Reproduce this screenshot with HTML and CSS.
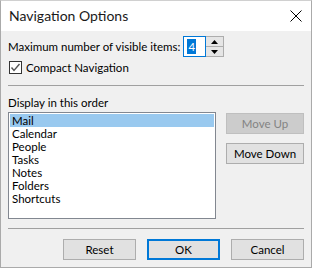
FILE: index.html
```html
<!DOCTYPE html>
<html lang="en">
<head>
    <meta charset="UTF-8">
    <title>Navigation Options</title>
    <link rel="stylesheet" href="styles.css">
</head>
<body>

    <div class="dialog">
        <div class="titlebar">
            <span class="title">Navigation Options</span>
            <svg class="close" width="12" height="12" viewBox="0 0 12 12">
                <path d="M0.5 0.5 L11.5 11.5 M11.5 0.5 L0.5 11.5" stroke="#000" stroke-width="1" fill="none"/>
            </svg>
        </div>

        <div class="content">
            <div class="max-row">
                <span>Maximum number of visible items:</span>
                <div class="spin-input"><span class="sel">4</span></div>
                <div class="spin-buttons">
                    <div class="spin-half">
                        <svg width="7" height="4" viewBox="0 0 7 4"><path d="M3.5 0 L7 4 L0 4 Z" fill="#000"/></svg>
                    </div>
                    <div class="spin-half">
                        <svg width="7" height="4" viewBox="0 0 7 4"><path d="M0 0 L7 0 L3.5 4 Z" fill="#000"/></svg>
                    </div>
                </div>
            </div>

            <div class="check-row">
                <span class="checkbox">
                    <svg width="11" height="11" viewBox="0 0 11 11">
                        <path d="M1.5 5.5 L4 8.5 L9.5 2" stroke="#555" stroke-width="1.4" fill="none"/>
                    </svg>
                </span>
                <span>Compact Navigation</span>
            </div>

            <div class="separator"></div>

            <div class="order-label">Display in this order</div>

            <div class="order-area">
                <ul class="listbox">
                    <li class="selected">Mail</li>
                    <li>Calendar</li>
                    <li>People</li>
                    <li>Tasks</li>
                    <li>Notes</li>
                    <li>Folders</li>
                    <li>Shortcuts</li>
                </ul>
                <div class="side-buttons">
                    <button class="btn" disabled>Move Up</button>
                    <button class="btn">Move Down</button>
                </div>
            </div>

            <div class="separator sep-bottom"></div>

            <div class="footer">
                <button class="btn">Reset</button>
                <button class="btn btn-default">OK</button>
                <button class="btn">Cancel</button>
            </div>
        </div>
    </div>

</body>
</html>
```

FILE: styles.css
```css
body {
    margin: 0;
    padding: 0;
    font-family: Lato, "Noto Sans", sans-serif;
    font-size: 11.5px;
    line-height: 14px;
    color: #000;
}

.dialog {
    width: 312px;
    height: 268px;
    box-sizing: border-box;
    border: 1px solid #aaaaaa;
    border-top-color: #d0d0d0;
    background-color: #f0f0f0;
}

.titlebar {
    height: 30px;
    background-color: #fff;
    display: flex;
    align-items: center;
    justify-content: space-between;
    padding: 0 9px 0 8px;
}

.title {
    font-size: 14px;
    color: #1a1a1a;
}

.content {
    padding: 5px 7px 0 7px;
}

.max-row {
    display: flex;
    align-items: center;
    height: 21px;
}

.max-row > span {
    margin-right: 3px;
}

.spin-input {
    width: 23px;
    height: 21px;
    box-sizing: border-box;
    border: 1px solid #0078d7;
    background-color: #fff;
    display: flex;
    align-items: center;
    padding-left: 3px;
}

.sel {
    background-color: #0078d7;
    color: #fff;
    line-height: 15px;
    padding: 0 1px;
}

.spin-buttons {
    width: 18px;
    height: 21px;
    box-sizing: border-box;
    border: 1px solid #adadad;
    border-left: none;
    display: flex;
    flex-direction: column;
}

.spin-half {
    flex: 1;
    display: flex;
    align-items: center;
    justify-content: center;
    background-color: #e5e5e5;
}

.spin-half:first-child {
    border-bottom: 1px solid #adadad;
}

.check-row {
    display: flex;
    align-items: center;
    margin-top: 4px;
    height: 13px;
}

.checkbox {
    width: 13px;
    height: 13px;
    box-sizing: border-box;
    border: 1px solid #333;
    background-color: #fff;
    margin: 0 4px 0 1px;
    display: flex;
}

.separator {
    height: 1px;
    background-color: #a0a0a0;
    margin-top: 11px;
}

.order-label {
    margin-top: 9px;
    line-height: 16px;
}

.order-area {
    display: flex;
    margin-top: 1px;
}

.listbox {
    list-style: none;
    margin: 0;
    padding: 1px;
    width: 209px;
    height: 107px;
    box-sizing: border-box;
    border: 1px solid #828790;
    background-color: #fff;
}

.listbox li {
    height: 13px;
    line-height: 13px;
    padding-left: 2px;
}

.listbox li.selected {
    background-color: #99c9ef;
}

.side-buttons {
    display: flex;
    flex-direction: column;
    margin-left: 10px;
    gap: 9px;
    padding-top: 1px;
}

.btn {
    width: 78px;
    height: 21px;
    box-sizing: border-box;
    border: 1px solid #adadad;
    background-color: #e1e1e1;
    font-family: inherit;
    font-size: 11.5px;
    color: #000;
    padding: 0;
}

.btn:disabled {
    background-color: #cccccc;
    border-color: #bfbfbf;
    color: #838383;
}

.sep-bottom {
    margin-top: 9px;
}

.footer {
    display: flex;
    justify-content: flex-end;
    gap: 11px;
    margin-top: 10px;
}

.footer .btn {
    width: 73px;
}

.btn-default {
    border: 2px solid #0078d7;
}
```
